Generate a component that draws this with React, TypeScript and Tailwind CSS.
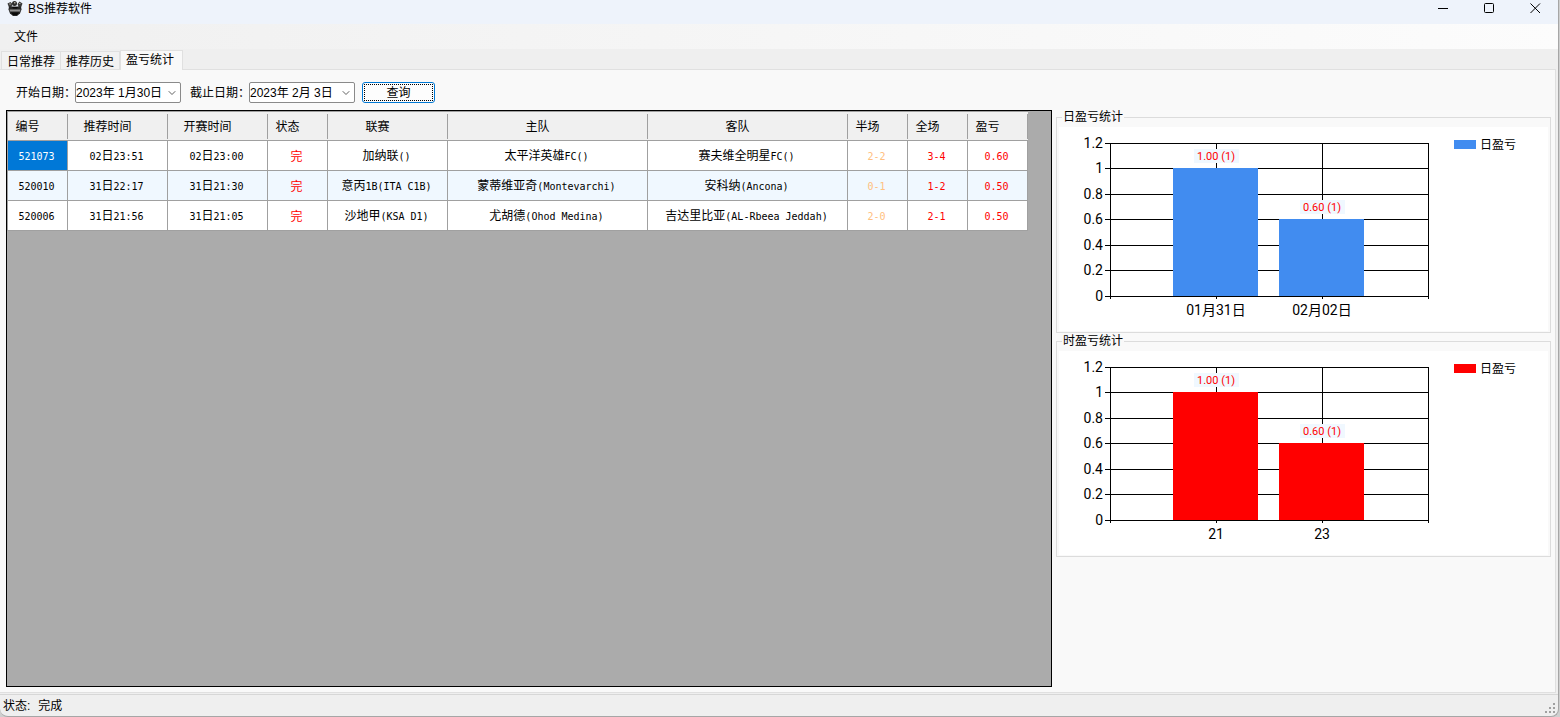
import { Fragment, useState } from "react";
import clsx from "clsx";
import { ChevronDown } from "lucide-react";

interface Match {
  id: string;
  tipTime: string;
  startTime: string;
  state: string;
  league: string;
  home: string;
  away: string;
  half: string;
  full: string;
  profit: string;
}

interface Bar {
  label: string;
  value: number;
  count: number;
}

const matches: Match[] = [
  {
    id: "521073",
    tipTime: "02日23:51",
    startTime: "02日23:00",
    state: "完",
    league: "加纳联()",
    home: "太平洋英雄FC()",
    away: "赛夫维全明星FC()",
    half: "2-2",
    full: "3-4",
    profit: "0.60",
  },
  {
    id: "520010",
    tipTime: "31日22:17",
    startTime: "31日21:30",
    state: "完",
    league: "意丙1B(ITA C1B)",
    home: "蒙蒂维亚奇(Montevarchi)",
    away: "安科纳(Ancona)",
    half: "0-1",
    full: "1-2",
    profit: "0.50",
  },
  {
    id: "520006",
    tipTime: "31日21:56",
    startTime: "31日21:05",
    state: "完",
    league: "沙地甲(KSA D1)",
    home: "尤胡德(Ohod Medina)",
    away: "吉达里比亚(AL-Rbeea Jeddah)",
    half: "2-0",
    full: "2-1",
    profit: "0.50",
  },
];

const columns: { key: keyof Match; title: string; width: string; color?: string }[] = [
  { key: "id", title: "编号", width: "w-[60px]" },
  { key: "tipTime", title: "推荐时间", width: "w-[100px]" },
  { key: "startTime", title: "开赛时间", width: "w-[100px]" },
  { key: "state", title: "状态", width: "w-[60px]", color: "text-[#ff0000]" },
  { key: "league", title: "联赛", width: "w-[120px]" },
  { key: "home", title: "主队", width: "w-[200px]" },
  { key: "away", title: "客队", width: "w-[200px]" },
  { key: "half", title: "半场", width: "w-[60px]", color: "text-[#ffc080]" },
  { key: "full", title: "全场", width: "w-[60px]", color: "text-[#ff0000]" },
  { key: "profit", title: "盈亏", width: "w-[60px]", color: "text-[#ff0000]" },
];

const tabs = ["日常推荐", "推荐历史", "盈亏统计"];

const dailyBars: Bar[] = [
  { label: "01月31日", value: 1, count: 1 },
  { label: "02月02日", value: 0.6, count: 1 },
];

const hourlyBars: Bar[] = [
  { label: "21", value: 1, count: 1 },
  { label: "23", value: 0.6, count: 1 },
];

export default function App() {
  const [tab, setTab] = useState("盈亏统计");
  const [selected, setSelected] = useState("521073");

  return (
    <div className="min-h-screen bg-[#cfcfcf] pr-px font-['Liberation_Sans','Noto_Sans_CJK_SC',sans-serif] text-xs leading-4 text-black">
      <div className="flex min-h-screen flex-col rounded-b-lg border-r border-b border-[#a6a6a6] bg-[#efefef]">
        <TitleBar />
        <nav className="flex h-[25px] items-center bg-linear-to-r from-[#f0f0f0] to-[#fcfcfc] px-3.5">
          <button>文件</button>
        </nav>
        <div role="tablist" className="flex h-5 items-end pl-px">
          {tabs.map((name) => (
            <button
              key={name}
              role="tab"
              aria-selected={tab === name}
              onClick={() => setTab(name)}
              className={clsx(
                "border-t border-r border-[#e0e0e0]",
                tab === name
                  ? "relative -mb-px h-5 border-l bg-[#f9f9f9] pr-2 pb-0.5 pl-[5px]"
                  : "h-[18px] bg-[#f2f2f2] px-[5px] pt-0.5 first:border-l",
              )}
            >
              {name}
            </button>
          ))}
        </div>
        <main className="mr-0.5 flex flex-1 flex-col border-t border-r border-b border-[#e0e0e0] bg-[#f9f9f9] pt-3 pr-1 pb-[5px] pl-1.5">
          <form
            className="flex items-center pl-2.5"
            onSubmit={(e) => e.preventDefault()}
          >
            <DateField id="from" label="开始日期：" value="2023年 1月30日" />
            <DateField id="to" label="截止日期：" value="2023年 2月 3日" />
            <button className="-ml-0.5 h-[21px] w-[73px] rounded-[3px] border border-[#0078d4] bg-[#fdfdfd] p-px">
              <span className="flex h-full items-center justify-center border border-dotted border-black">
                查询
              </span>
            </button>
          </form>
          <div className="mt-[7px] flex flex-1 gap-1">
            <div className="min-w-0 flex-1 overflow-hidden border border-black bg-[#ababab]">
              <table className="table-fixed border-separate border-spacing-0 border-t border-l border-[#a0a0a0]">
                <thead>
                  <tr className="bg-[#f0f0f0]">
                    {columns.map(({ key, title, width }) => (
                      <th
                        key={key}
                        className={clsx(
                          "h-[29px] border-b border-[#a0a0a0] p-0 font-normal",
                          width,
                        )}
                      >
                        <div className="flex h-[25px] items-center justify-center border-r border-[#a0a0a0] pt-0.5 pr-5">
                          {title}
                        </div>
                      </th>
                    ))}
                  </tr>
                </thead>
                <tbody>
                  {matches.map((match) => (
                    <tr
                      key={match.id}
                      onClick={() => setSelected(match.id)}
                      className="bg-white even:bg-[#f0f8ff]"
                    >
                      {columns.map(({ key, color }) => (
                        <td
                          key={key}
                          className={clsx(
                            "h-[30px] border-r border-b border-[#a0a0a0] pt-0.5 pr-0.5 pb-0 pl-0 text-center whitespace-nowrap",
                            key === "id" && selected === match.id
                              ? "bg-[#0078d7] text-white"
                              : color,
                          )}
                        >
                          <CellText text={match[key]} />
                        </td>
                      ))}
                    </tr>
                  ))}
                </tbody>
              </table>
            </div>
            <div className="flex w-[495px] shrink-0 flex-col gap-px">
              <ChartBox title="日盈亏统计" color="#418cf0" bars={dailyBars} />
              <ChartBox title="时盈亏统计" color="#ff0000" bars={hourlyBars} />
            </div>
          </div>
        </main>
        <footer className="mt-px flex h-[22px] items-center gap-2 border-t border-[#d7d7d7] pl-[3px]">
          <span>状态:</span>
          <span>完成</span>
          <svg
            className="mr-0.5 ml-auto self-end"
            width="11"
            height="13"
            fill="#a0a0a0"
            shapeRendering="crispEdges"
          >
            <path d="M8 0h2v2h-2zM4 4h2v2h-2zM8 4h2v2h-2zM0 8h2v2h-2zM4 8h2v2h-2zM8 8h2v2h-2z" />
          </svg>
        </footer>
      </div>
    </div>
  );
}

function TitleBar() {
  return (
    <header className="flex h-6 items-start bg-[#eef3fb]">
      <svg className="ml-[7px]" width="16" height="17" viewBox="0 0 16 17">
        <path d="M0.5 3.5l3-1.5 2 2-1 3-2.5 0.5z" fill="#3a3a3a" />
        <path d="M15.5 3.5l-3-2-2 2.500 1 3 2.500 0.500z" fill="#3a3a3a" />
        <circle cx="7.500" cy="3.500" r="2.500" fill="#2a2a2a" />
        <path d="M2 6.500h12l0.500 3-1.500 4-3 2.500H6L3 13.500l-1.500-4z" fill="#262626" />
        <path d="M2.500 9.500h11l-0.500 2H3z" fill="#8f8f8f" />
        <path d="M5 7h6l-1 1.500H6z" fill="#0a0a0a" />
        <path d="M2 3.500h2v1H2zM7 2h1.500v1.500H7zM12 3h1.500v1H12z" fill="#a8a49a" />
        <path d="M4 12.500h8l-2 2.500H6z" fill="#080808" />
      </svg>
      <h1 className="ml-[5px] flex-1 pt-px">BS推荐软件</h1>
      <button aria-label="最小化" className="flex h-4 w-[46px] justify-center">
        <svg width="11" height="16" stroke="#000">
          <path d="M0 8.5h10" />
        </svg>
      </button>
      <button aria-label="最大化" className="flex h-4 w-[46px] justify-center">
        <svg width="11" height="16" stroke="#000" fill="none">
          <rect x="0.5" y="3.5" width="9" height="9" rx="1" />
        </svg>
      </button>
      <button aria-label="关闭" className="flex h-4 w-[46px] justify-center">
        <svg width="11" height="16" stroke="#000">
          <path d="M0.5 3.5l9.500 9.500M10 3.5l-9.500 9.500" />
        </svg>
      </button>
    </header>
  );
}

interface DateFieldProps {
  id: string;
  label: string;
  value: string;
}

function DateField({ id, label, value }: DateFieldProps) {
  const [date, setDate] = useState(value);

  return (
    <div className="mr-[9px] flex items-center">
      <label htmlFor={id} className="w-[59px] whitespace-nowrap">
        {label}
      </label>
      <div className="flex h-[21px] w-[106px] items-center rounded-[2px] border border-[#8a8a8a] bg-white">
        <input
          id={id}
          value={date}
          onChange={(e) => setDate(e.target.value)}
          className="w-[90px] outline-none"
        />
        <button type="button" aria-label="选择日期">
          <ChevronDown className="size-3 text-[#606060]" strokeWidth={2} />
        </button>
      </div>
    </div>
  );
}

// latin runs are half as wide as the chinese glyphs
function CellText({ text }: { text: string }) {
  const parts = text.split(/([\x20-\x7e]+)/).filter(Boolean);

  return (
    <>
      {parts.map((part, i) =>
        /^[\x20-\x7e]/.test(part) ? (
          <span key={i} className="font-['DejaVu_Sans_Mono',monospace] text-[10px]">
            {part}
          </span>
        ) : (
          <Fragment key={i}>{part}</Fragment>
        ),
      )}
    </>
  );
}

interface ChartBoxProps {
  title: string;
  color: string;
  bars: Bar[];
}

const gridLines = [0, 0.2, 0.4, 0.6, 0.8, 1, 1.2];
const scaleY = (value: number) => 169 - Math.round(value * 127.5);

function ChartBox({ title, color, bars }: ChartBoxProps) {
  return (
    <fieldset className="min-w-0 border border-[#dcdcdc] px-0.5 pt-[3px] pb-px">
      <legend className="ml-[3px] h-3.5 px-px leading-3.5">{title}</legend>
      <svg
        viewBox="0 0 489 204"
        className="block w-full bg-white font-['Roboto','Noto_Sans_CJK_SC',sans-serif]"
      >
        <g stroke="#000" shapeRendering="crispEdges">
          {gridLines.map((v) => (
            <path key={v} d={`M46 ${scaleY(v) + 0.5}H370`} />
          ))}
          <path d="M51.5 16V172M369.5 16V172" />
          {bars.map((bar, i) => (
            <path key={bar.label} d={`M${157.5 + i * 106} 16V172`} />
          ))}
        </g>
        <g fontSize="14" textAnchor="end">
          {gridLines.map((v) => (
            <text key={v} x="44" y={scaleY(v) + 5}>
              {v}
            </text>
          ))}
        </g>
        {bars.map((bar, i) => {
          const x = 157 + i * 106;
          const top = scaleY(bar.value);

          return (
            <g key={bar.label} textAnchor="middle">
              <rect x={x - 43} y={top} width="85" height={169 - top} fill={color} />
              <rect x={x - 22} y={top - 19} width="45" height="14" fill="#f0f8ff" />
              <text x={x} y={top - 8} fontSize="11" fill="#ff0000">
                {`${bar.value.toFixed(2)} (${bar.count})`}
              </text>
              <text x={x} y="188" fontSize="14">
                {bar.label}
              </text>
            </g>
          );
        })}
        <rect x="395" y="13" width="22" height="9" fill={color} />
        <text x="421" y="22" fontSize="12">
          日盈亏
        </text>
      </svg>
    </fieldset>
  );
}
